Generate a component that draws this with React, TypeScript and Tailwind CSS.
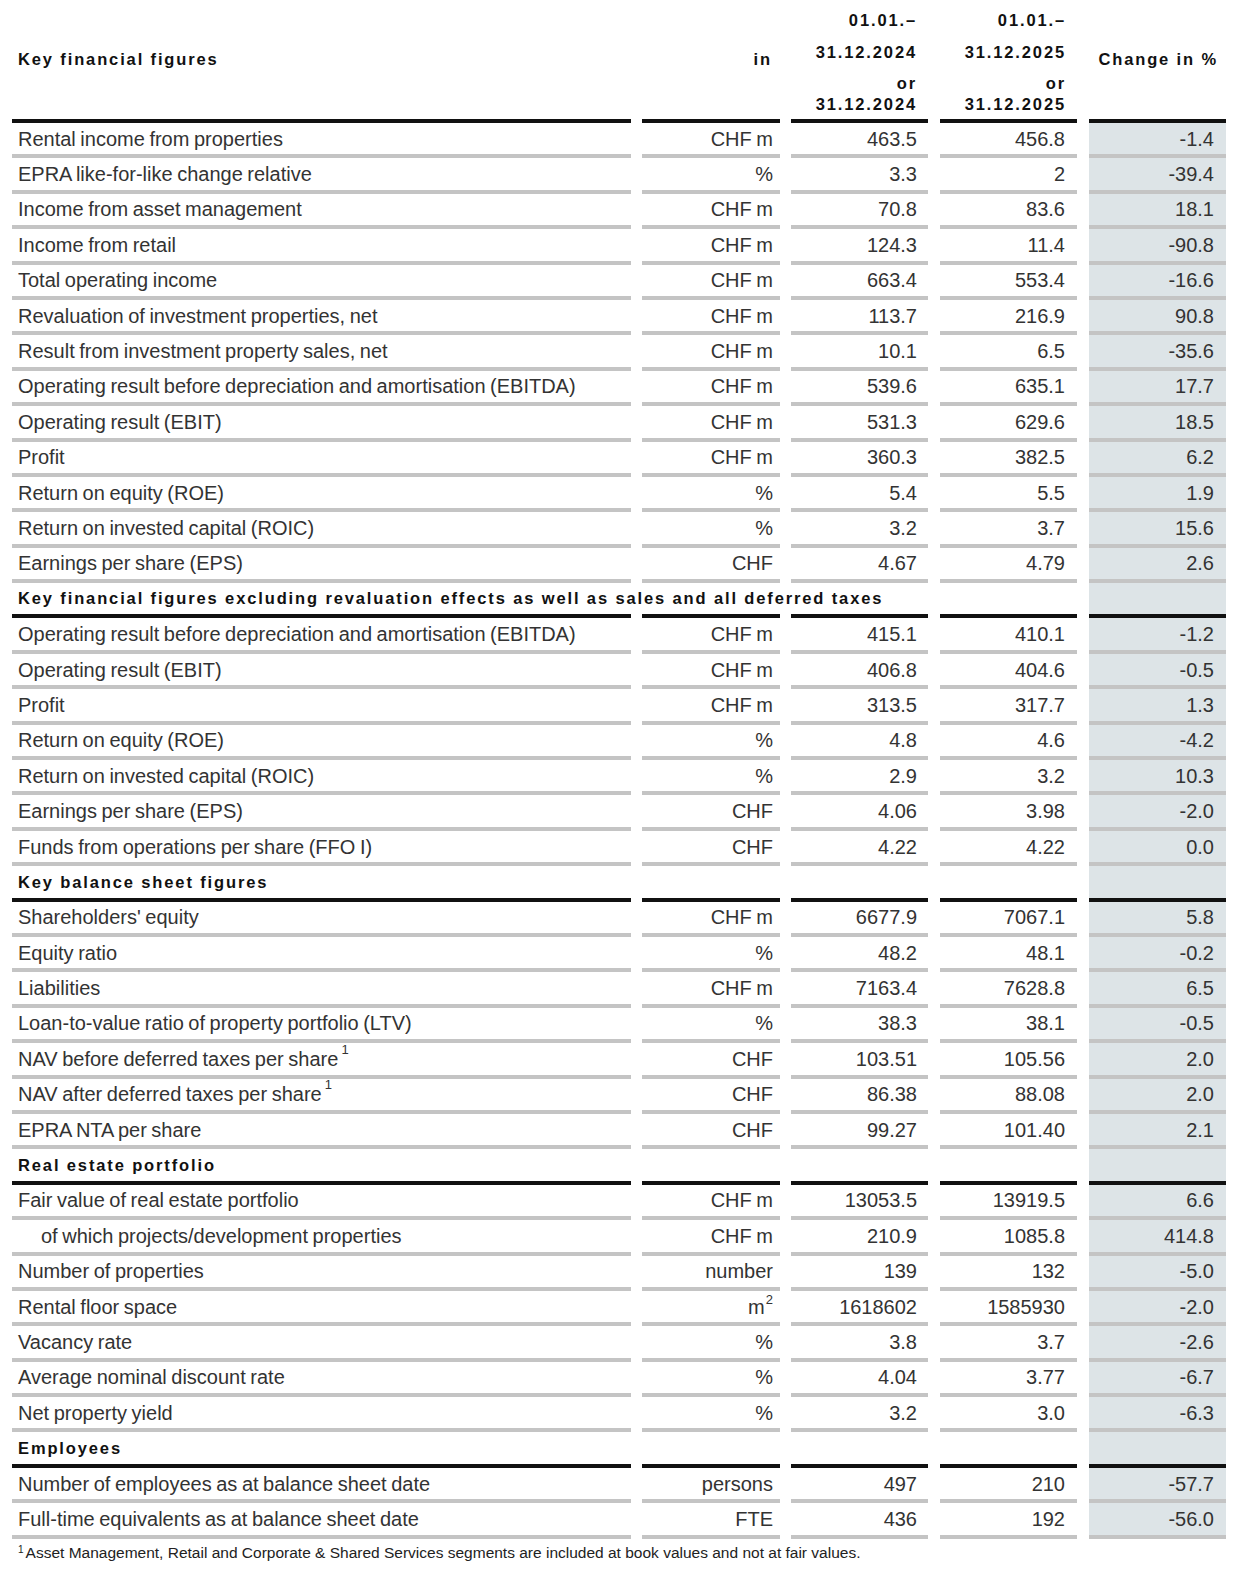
import React from "react";

type DataRow = {
  label: string;
  unit: string;
  a: string;
  b: string;
  c: string;
  indent?: boolean;
  sup?: boolean;
  m2?: boolean;
};
type SectionRow = { section: string };
type Row = DataRow | SectionRow;

const rows: Row[] = [
  { label: "Rental income from properties", unit: "CHF m", a: "463.5", b: "456.8", c: "-1.4" },
  { label: "EPRA like-for-like change relative", unit: "%", a: "3.3", b: "2", c: "-39.4" },
  { label: "Income from asset management", unit: "CHF m", a: "70.8", b: "83.6", c: "18.1" },
  { label: "Income from retail", unit: "CHF m", a: "124.3", b: "11.4", c: "-90.8" },
  { label: "Total operating income", unit: "CHF m", a: "663.4", b: "553.4", c: "-16.6" },
  { label: "Revaluation of investment properties, net", unit: "CHF m", a: "113.7", b: "216.9", c: "90.8" },
  { label: "Result from investment property sales, net", unit: "CHF m", a: "10.1", b: "6.5", c: "-35.6" },
  { label: "Operating result before depreciation and amortisation (EBITDA)", unit: "CHF m", a: "539.6", b: "635.1", c: "17.7" },
  { label: "Operating result (EBIT)", unit: "CHF m", a: "531.3", b: "629.6", c: "18.5" },
  { label: "Profit", unit: "CHF m", a: "360.3", b: "382.5", c: "6.2" },
  { label: "Return on equity (ROE)", unit: "%", a: "5.4", b: "5.5", c: "1.9" },
  { label: "Return on invested capital (ROIC)", unit: "%", a: "3.2", b: "3.7", c: "15.6" },
  { label: "Earnings per share (EPS)", unit: "CHF", a: "4.67", b: "4.79", c: "2.6" },
  { section: "Key financial figures excluding revaluation effects as well as sales and all deferred taxes" },
  { label: "Operating result before depreciation and amortisation (EBITDA)", unit: "CHF m", a: "415.1", b: "410.1", c: "-1.2" },
  { label: "Operating result (EBIT)", unit: "CHF m", a: "406.8", b: "404.6", c: "-0.5" },
  { label: "Profit", unit: "CHF m", a: "313.5", b: "317.7", c: "1.3" },
  { label: "Return on equity (ROE)", unit: "%", a: "4.8", b: "4.6", c: "-4.2" },
  { label: "Return on invested capital (ROIC)", unit: "%", a: "2.9", b: "3.2", c: "10.3" },
  { label: "Earnings per share (EPS)", unit: "CHF", a: "4.06", b: "3.98", c: "-2.0" },
  { label: "Funds from operations per share (FFO I)", unit: "CHF", a: "4.22", b: "4.22", c: "0.0" },
  { section: "Key balance sheet figures" },
  { label: "Shareholders' equity", unit: "CHF m", a: "6677.9", b: "7067.1", c: "5.8" },
  { label: "Equity ratio", unit: "%", a: "48.2", b: "48.1", c: "-0.2" },
  { label: "Liabilities", unit: "CHF m", a: "7163.4", b: "7628.8", c: "6.5" },
  { label: "Loan-to-value ratio of property portfolio (LTV)", unit: "%", a: "38.3", b: "38.1", c: "-0.5" },
  { label: "NAV before deferred taxes per share", unit: "CHF", a: "103.51", b: "105.56", c: "2.0", sup: true },
  { label: "NAV after deferred taxes per share", unit: "CHF", a: "86.38", b: "88.08", c: "2.0", sup: true },
  { label: "EPRA NTA per share", unit: "CHF", a: "99.27", b: "101.40", c: "2.1" },
  { section: "Real estate portfolio" },
  { label: "Fair value of real estate portfolio", unit: "CHF m", a: "13053.5", b: "13919.5", c: "6.6" },
  { label: "of which projects/development properties", unit: "CHF m", a: "210.9", b: "1085.8", c: "414.8", indent: true },
  { label: "Number of properties", unit: "number", a: "139", b: "132", c: "-5.0" },
  { label: "Rental floor space", unit: "m", a: "1618602", b: "1585930", c: "-2.0", m2: true },
  { label: "Vacancy rate", unit: "%", a: "3.8", b: "3.7", c: "-2.6" },
  { label: "Average nominal discount rate", unit: "%", a: "4.04", b: "3.77", c: "-6.7" },
  { label: "Net property yield", unit: "%", a: "3.2", b: "3.0", c: "-6.3" },
  { section: "Employees" },
  { label: "Number of employees as at balance sheet date", unit: "persons", a: "497", b: "210", c: "-57.7" },
  { label: "Full-time equivalents as at balance sheet date", unit: "FTE", a: "436", b: "192", c: "-56.0" },
];

const col = [
  "w-[619px] shrink-0",
  "w-[138px] shrink-0 ml-[11px]",
  "w-[137px] shrink-0 ml-[11px]",
  "w-[137px] shrink-0 ml-[12px]",
  "w-[137px] shrink-0 ml-[12px]",
];

const gray = "border-b-4 border-[#c4c4c4]";
const black = "border-b-4 border-[#111]";
const head = "font-bold text-[16.5px] tracking-[1.87px] text-[#111]";

function DateHead({ year }: { year: string }) {
  return (
    <div className={`w-[137px] flex flex-col items-end pt-[4px] pr-[11px] ${head}`}>
      <div className="h-[32px] leading-[32px]">01.01.–</div>
      <div className="h-[32px] leading-[32px]">31.12.{year}</div>
      <div className="h-[30px] leading-[30px]">or</div>
      <div className="h-[13px] leading-[13px]">31.12.{year}</div>
    </div>
  );
}

function Header() {
  return (
    <div className="flex h-[123px]">
      <div className={`${col[0]} ${black} flex items-center pl-[6px] ${head}`}>Key financial figures</div>
      <div className={`${col[1]} ${black} flex items-center justify-end pr-[8px] ${head}`}>in</div>
      <div className={`${col[2]} ${black} flex`}>
        <DateHead year="2024" />
      </div>
      <div className={`${col[3]} ${black} flex`}>
        <DateHead year="2025" />
      </div>
      <div className={`${col[4]} ${black} flex items-center justify-end pr-[8px] ${head}`}>Change in %</div>
    </div>
  );
}

function Section({ title }: { title: string }) {
  return (
    <div className="flex h-[35.4px]">
      <div className={`${col[0]} ${black} flex items-center pl-[6px] whitespace-nowrap ${head}`}>{title}</div>
      <div className={`${col[1]} ${black}`} />
      <div className={`${col[2]} ${black}`} />
      <div className={`${col[3]} ${black}`} />
      <div className={`${col[4]} ${black} bg-[#dde4e7]`} />
    </div>
  );
}

function Line({ r }: { r: DataRow }) {
  return (
    <div className="flex h-[35.4px] text-[20px] text-[#333] [word-spacing:-1px]">
      <div className={`${col[0]} ${gray} flex items-center whitespace-nowrap ${r.indent ? "pl-[29px]" : "pl-[6px]"}`}>
        <span>{r.label}</span>
        {r.sup && <sup className="text-[13px] ml-[3px] -top-[9px]">1</sup>}
      </div>
      <div className={`${col[1]} ${gray} flex items-center justify-end pr-[7px]`}>
        {r.unit}
        {r.m2 && <sup className="text-[13px] ml-[1px]">2</sup>}
      </div>
      <div className={`${col[2]} ${gray} flex items-center justify-end pr-[11px]`}>{r.a}</div>
      <div className={`${col[3]} ${gray} flex items-center justify-end pr-[12px]`}>{r.b}</div>
      <div className={`${col[4]} ${gray} bg-[#dde4e7] flex items-center justify-end pr-[12px]`}>{r.c}</div>
    </div>
  );
}

export default function App() {
  return (
    <div className="w-[1246px] h-[1576px] bg-white pl-[12px] font-['Liberation_Sans',Arial,sans-serif]">
      <Header />
      {rows.map((r, i) =>
        "section" in r ? <Section key={i} title={r.section} /> : <Line key={i} r={r} />
      )}
      <div className="pl-[6px] pt-[5px] text-[15.5px] text-[#222] leading-[18px]">
        <sup className="text-[10px] mr-[2px]">1</sup>
        Asset Management, Retail and Corporate &amp; Shared Services segments are included at book values and not at fair values.
      </div>
    </div>
  );
}
